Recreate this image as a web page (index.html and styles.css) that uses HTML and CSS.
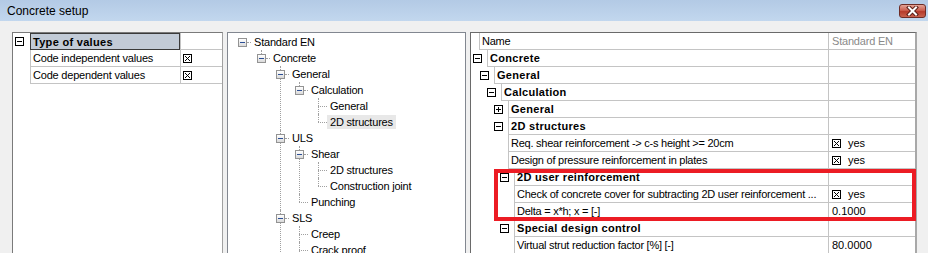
FILE: index.html
```html
<!DOCTYPE html>
<html lang="en">
<head>
    <meta charset="UTF-8">
    <title>Concrete setup</title>
    <link rel="stylesheet" href="styles.css">
</head>
<body>
    <div class="titlebar">
        <span class="title">Concrete setup</span>
        <span class="close">
            <svg width="13" height="10" viewBox="0 0 13 10">
                <path d="M3 1.5L10 8.5M10 1.5L3 8.5" stroke="#5b1f18" stroke-width="4" stroke-linecap="square"/>
                <path d="M3 1.5L10 8.5M10 1.5L3 8.5" stroke="#fff" stroke-width="2" stroke-linecap="square"/>
            </svg>
        </span>
    </div>

    <div class="content">
        <!-- type of values -->
        <div class="panel types">
            <div class="tgrid">
                <div class="tog"><span class="pbox"></span></div>
                <div class="cell head">Type of values</div>
                <div class="cell val"></div>

                <div class="tog"></div>
                <div class="cell">Code independent values</div>
                <div class="cell val"><svg class="chk" viewBox="0 0 9 9"><rect x="0.5" y="0.5" width="8" height="8"/><path d="M2 2L7 7M7 2L2 7"/></svg></div>

                <div class="tog"></div>
                <div class="cell">Code dependent values</div>
                <div class="cell val"><svg class="chk" viewBox="0 0 9 9"><rect x="0.5" y="0.5" width="8" height="8"/><path d="M2 2L7 7M7 2L2 7"/></svg></div>
            </div>
        </div>

        <!-- code tree -->
        <div class="panel tree">
            <ul class="root">
                <li>
                    <div class="node"><span class="tbox"></span><span class="dash"></span><span class="lbl">Standard EN</span></div>
                    <ul>
                        <li>
                            <div class="node"><span class="tbox"></span><span class="dash"></span><span class="lbl">Concrete</span></div>
                            <ul>
                                <li>
                                    <div class="node"><span class="tbox"></span><span class="dash"></span><span class="lbl">General</span></div>
                                    <ul>
                                        <li>
                                            <div class="node"><span class="tbox"></span><span class="dash"></span><span class="lbl">Calculation</span></div>
                                            <ul>
                                                <li><div class="node"><span class="stub"></span><span class="lbl">General</span></div></li>
                                                <li><div class="node"><span class="stub"></span><span class="lbl sel">2D structures</span></div></li>
                                            </ul>
                                        </li>
                                    </ul>
                                </li>
                                <li>
                                    <div class="node"><span class="tbox"></span><span class="dash"></span><span class="lbl">ULS</span></div>
                                    <ul>
                                        <li>
                                            <div class="node"><span class="tbox"></span><span class="dash"></span><span class="lbl">Shear</span></div>
                                            <ul>
                                                <li><div class="node"><span class="stub"></span><span class="lbl">2D structures</span></div></li>
                                                <li><div class="node"><span class="stub"></span><span class="lbl">Construction joint</span></div></li>
                                            </ul>
                                        </li>
                                        <li><div class="node"><span class="stub"></span><span class="lbl">Punching</span></div></li>
                                    </ul>
                                </li>
                                <li>
                                    <div class="node"><span class="tbox"></span><span class="dash"></span><span class="lbl">SLS</span></div>
                                    <ul>
                                        <li><div class="node"><span class="stub"></span><span class="lbl">Creep</span></div></li>
                                        <li><div class="node"><span class="stub"></span><span class="lbl">Crack proof</span></div></li>
                                        <li><div class="node"><span class="stub"></span><span class="lbl">Deflection</span></div></li>
                                    </ul>
                                </li>
                                <li><div class="node"><span class="stub"></span><span class="lbl">Detailing</span></div></li>
                            </ul>
                        </li>
                    </ul>
                </li>
            </ul>
        </div>

        <!-- property grid -->
        <div class="panel props">
            <div class="prow">
                <div class="ind i8"></div>
                <div class="pname">Name</div>
                <div class="pval muted">Standard EN</div>
            </div>
            <div class="prow">
                <div class="ind i16"><span class="pbox"></span></div>
                <div class="pname b">Concrete</div>
                <div class="pval"></div>
            </div>
            <div class="prow">
                <div class="ind i23"><span class="pbox"></span></div>
                <div class="pname b">General</div>
                <div class="pval"></div>
            </div>
            <div class="prow">
                <div class="ind i30"><span class="pbox"></span></div>
                <div class="pname b">Calculation</div>
                <div class="pval"></div>
            </div>
            <div class="prow">
                <div class="ind i37"><span class="pbox plus"></span></div>
                <div class="pname b">General</div>
                <div class="pval"></div>
            </div>
            <div class="prow">
                <div class="ind i37"><span class="pbox"></span></div>
                <div class="pname b">2D structures</div>
                <div class="pval"></div>
            </div>
            <div class="prow">
                <div class="ind i37"></div>
                <div class="pname">Req. shear reinforcement -&gt; c-s height &gt;= 20cm</div>
                <div class="pval"><svg class="chk" viewBox="0 0 9 9"><rect x="0.5" y="0.5" width="8" height="8"/><path d="M2 2L7 7M7 2L2 7"/></svg>yes</div>
            </div>
            <div class="prow">
                <div class="ind i37"></div>
                <div class="pname">Design of pressure reinforcement in plates</div>
                <div class="pval"><svg class="chk" viewBox="0 0 9 9"><rect x="0.5" y="0.5" width="8" height="8"/><path d="M2 2L7 7M7 2L2 7"/></svg>yes</div>
            </div>
            <div class="prow">
                <div class="ind i43"><span class="pbox"></span></div>
                <div class="pname b">2D user reinforcement</div>
                <div class="pval"></div>
            </div>
            <div class="prow">
                <div class="ind i43"></div>
                <div class="pname">Check of concrete cover for subtracting 2D user reinforcement ...</div>
                <div class="pval"><svg class="chk" viewBox="0 0 9 9"><rect x="0.5" y="0.5" width="8" height="8"/><path d="M2 2L7 7M7 2L2 7"/></svg>yes</div>
            </div>
            <div class="prow">
                <div class="ind i43"></div>
                <div class="pname">Delta = x*h; x = [-]</div>
                <div class="pval">0.1000</div>
            </div>
            <div class="prow">
                <div class="ind i43"><span class="pbox"></span></div>
                <div class="pname b">Special design control</div>
                <div class="pval"></div>
            </div>
            <div class="prow">
                <div class="ind i43"></div>
                <div class="pname">Virtual strut reduction factor [%] [-]</div>
                <div class="pval">80.0000</div>
            </div>

            <div class="mark"></div>
        </div>
    </div>
</body>
</html>
```

FILE: styles.css
```css
body { margin: 0; height: 253px; overflow: hidden; background: #f0f0f0; color: #000; font: 11px "Liberation Sans", Arial, sans-serif; }

/* window title */
.titlebar { height: 21px; display: flex; align-items: center; justify-content: space-between; padding: 0 2px 0 7px; background: linear-gradient(#b3cae5, #c2d7ee); }
.title { font-size: 12px; }
.close { width: 27px; height: 14px; box-sizing: border-box; border: 1px solid #6e2c26; border-radius: 3px; display: flex; align-items: center; justify-content: center; background: linear-gradient(#e3a497, #cc5f4f 45%, #b63b2b 55%, #c9634f); }

.content { display: flex; gap: 4px; padding: 11px 11px 0 12px; }
.panel { background: #fff; border: 1px solid #828790; box-sizing: border-box; height: 240px; }
.types { width: 211px; border-color: #7a7a7a #a0a0a0 #a0a0a0 #7a7a7a; }
.tree { width: 239px; padding: 1px 0 0 10px; }
.props { width: 447px; position: relative; border-color: #6a6a6a #a8a8a8 #a8a8a8 #6a6a6a; border-right-width: 2px; }

/* toggle boxes of the grids */
.pbox { width: 9px; height: 9px; box-sizing: border-box; border: 1px solid #000; background: #fff; display: grid; place-items: center; }
.pbox::before, .pbox.plus::after { content: ''; grid-area: 1 / 1; background: #000; }
.pbox::before { width: 5px; height: 1px; }
.pbox.plus::after { width: 1px; height: 5px; }

.chk { width: 9px; height: 9px; flex: none; fill: none; stroke: #000; stroke-width: 1; }

/* type of values grid */
.tgrid { display: grid; grid-template-columns: 17px 150px 1fr; grid-auto-rows: 17px; }
.tog { display: flex; align-items: center; padding-left: 2px; }
.cell { border-left: 1px solid #c4c4c4; border-bottom: 1px solid #c4c4c4; padding-left: 2px; display: flex; align-items: center; white-space: nowrap; letter-spacing: -0.2px; }
.cell.head { background: #c2cbd7; border: 1px solid #3a3a3a; font-weight: bold; letter-spacing: 0.3px; }
.cell.val { padding-left: 2px; }

/* code tree */
.tree ul { list-style: none; margin: 0; padding: 0; }
.tree ul ul { padding-left: 19px; }
.tree li { position: relative; }
.tree ul ul > li::before { content: ''; position: absolute; left: 4px; top: 0; bottom: 0; border-left: 1px dotted #a0a0a0; }
.tree ul ul > li:last-child::before { bottom: auto; height: 8px; }
.node { display: flex; align-items: center; height: 16px; position: relative; letter-spacing: -0.2px; }
.tbox { width: 9px; height: 9px; box-sizing: border-box; border: 1px solid #939393; background: linear-gradient(#fff, #dadada); display: grid; place-items: center; flex: none; }
.tbox::before { content: ''; width: 5px; height: 1px; background: #2c4f95; }
.dash { width: 4px; border-top: 1px dotted #a0a0a0; }
.stub { width: 9px; margin-left: 4px; border-top: 1px dotted #a0a0a0; }
.lbl { padding: 0 3px; line-height: 14px; white-space: nowrap; }
.lbl.sel { background: #e8e8e8; }

/* property grid */
.prow { display: flex; height: 17px; }
.ind { flex: none; display: flex; align-items: center; justify-content: flex-end; padding-right: 5px; box-sizing: border-box; }
.i8 { width: 8px; }
.i16 { width: 16px; }
.i23 { width: 23px; }
.i30 { width: 30px; }
.i37 { width: 37px; }
.i43 { width: 43px; }
.pname { flex: 1; min-width: 0; border-left: 1px solid #c4c4c4; border-bottom: 1px solid #c4c4c4; padding-left: 2px; display: flex; align-items: center; white-space: nowrap; overflow: hidden; letter-spacing: -0.25px; }
.pname.b { font-weight: bold; letter-spacing: 0.3px; }
.pval { width: 87px; flex: none; box-sizing: border-box; border-left: 1px solid #c4c4c4; border-bottom: 1px solid #c4c4c4; padding-left: 3px; display: flex; align-items: center; gap: 7px; }
.pval.muted { color: #8a8a8a; letter-spacing: -0.2px; }

.mark { position: absolute; left: 23px; top: 136px; width: 422px; height: 52px; box-sizing: border-box; border: 4px solid #ec1c24; }
```
